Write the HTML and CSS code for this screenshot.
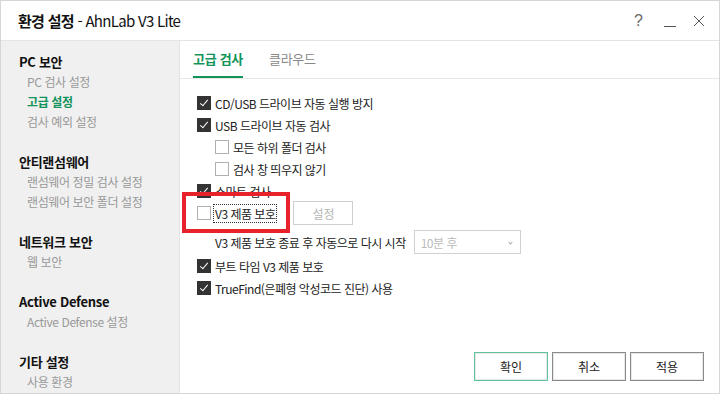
FILE: index.html
```html
<!DOCTYPE html>
<html lang="ko">
    <head>
        <meta charset="UTF-8">
        <title>환경 설정 - AhnLab V3 Lite</title>
        <link rel="stylesheet" href="styles.css">
    </head>
    <body>
        <div class="window">
            <div class="titlebar">
                <p class="title"><b>환경 설정</b> - AhnLab V3 Lite</p>
                <div class="win_btns">
                    <span class="win_help">?</span>
                    <span class="win_min"></span>
                    <svg class="win_close" width="12" height="12" viewBox="0 0 12 12">
                        <path d="M1 1L11 11M11 1L1 11" stroke="#555" stroke-width="1" fill="none"/>
                    </svg>
                </div>
            </div>

            <div class="content">
                <div class="sidebar">
                    <div class="menu_group">
                        <p class="menu_title">PC 보안</p>
                        <p class="menu_item">PC 검사 설정</p>
                        <p class="menu_item active">고급 설정</p>
                        <p class="menu_item">검사 예외 설정</p>
                    </div>
                    <div class="menu_group">
                        <p class="menu_title">안티랜섬웨어</p>
                        <p class="menu_item">랜섬웨어 정밀 검사 설정</p>
                        <p class="menu_item">랜섬웨어 보안 폴더 설정</p>
                    </div>
                    <div class="menu_group">
                        <p class="menu_title">네트워크 보안</p>
                        <p class="menu_item">웹 보안</p>
                    </div>
                    <div class="menu_group">
                        <p class="menu_title">Active Defense</p>
                        <p class="menu_item">Active Defense 설정</p>
                    </div>
                    <div class="menu_group">
                        <p class="menu_title">기타 설정</p>
                        <p class="menu_item">사용 환경</p>
                    </div>
                </div>

                <div class="main">
                    <div class="tabs">
                        <span class="tab tab_on">고급 검사</span>
                        <span class="tab">클라우드</span>
                    </div>

                    <div class="options">
                        <label class="opt"><span class="chk on"></span>CD/USB 드라이브 자동 실행 방지</label>
                        <label class="opt"><span class="chk on"></span>USB 드라이브 자동 검사</label>
                        <label class="opt sub"><span class="chk"></span>모든 하위 폴더 검사</label>
                        <label class="opt sub"><span class="chk"></span>검사 창 띄우지 않기</label>
                        <label class="opt"><span class="chk on"></span>스마트 검사</label>
                        <div class="opt mark_row">
                            <span class="chk"></span><span class="focus_text">V3 제품 보호</span>
                            <button class="btn_set" disabled>설정</button>
                            <!-- 강조 표시 -->
                            <span class="red_mark"></span>
                        </div>
                        <div class="opt sub restart_row">
                            V3 제품 보호 종료 후 자동으로 다시 시작
                            <span class="select">10분 후<i class="arrow"></i></span>
                        </div>
                        <label class="opt"><span class="chk on"></span>부트 타임 V3 제품 보호</label>
                        <label class="opt"><span class="chk on"></span>TrueFind(은폐형 악성코드 진단) 사용</label>
                    </div>

                    <div class="footer">
                        <button class="btn btn_ok">확인</button>
                        <button class="btn">취소</button>
                        <button class="btn">적용</button>
                    </div>
                </div>
            </div>
        </div>
    </body>
</html>
```

FILE: styles.css
```css
* {
    margin: 0;
    padding: 0;
    box-sizing: border-box;
}

body {
    margin: 0;
    width: 720px;
    height: 394px;
    overflow: hidden;
    background-color: white;
    font-family: "Noto Sans CJK KR", "Noto Sans", sans-serif;
    font-size: 12px;
    color: #222;
}

.window {
    width: 720px;
    height: 394px;
    border: 1px solid #d6d6d6;
    display: flex;
    flex-direction: column;
}

/* 타이틀 바 */
.titlebar {
    height: 40px;
    flex: none;
    border-bottom: 1px solid #e4e4e4;
    display: flex;
    align-items: center;
    justify-content: space-between;
    padding: 0 14px 0 17px;
}

.title {
    font-size: 15px;
    color: #111;
    letter-spacing: -0.7px;
}

.title b {
    font-weight: bold;
}

.win_btns {
    display: flex;
    align-items: center;
}

.win_help {
    font-family: "Liberation Sans", sans-serif;
    font-size: 16px;
    color: #666;
    width: 30px;
    text-align: left;
}

.win_min {
    width: 12px;
    height: 1px;
    background-color: #555;
    margin: 12px 17px 0 0;
}

.win_close {
    display: block;
}

/* 본문 */
.content {
    flex: 1;
    display: flex;
    min-height: 0;
}

.sidebar {
    width: 179px;
    flex: none;
    background-color: #f0f0f0;
    border-right: 1px solid #e2e2e2;
    padding: 11px 0 0 18px;
    display: flex;
    flex-direction: column;
    gap: 20px;
}

.menu_title {
    height: 20px;
    line-height: 20px;
    font-size: 13px;
    font-weight: bold;
    color: #111;
    letter-spacing: -0.3px;
}

.menu_item {
    height: 20px;
    line-height: 20px;
    padding-left: 8px;
    color: #999;
    letter-spacing: -0.4px;
}

.menu_item.active {
    color: #12935a;
    font-weight: bold;
}

.main {
    flex: 1;
    display: flex;
    flex-direction: column;
}

.tabs {
    height: 38px;
    flex: none;
    border-bottom: 1px solid #e8e8e8;
    padding-left: 13px;
    display: flex;
    gap: 26px;
}

.tab {
    font-size: 13px;
    line-height: 35px;
    color: #888;
    letter-spacing: -0.3px;
}

.tab_on {
    color: #12935a;
    font-weight: bold;
    border-bottom: 2px solid #12935a;
}

.options {
    flex: 1;
    padding: 13px 0 0 17px;
}

.opt {
    height: 22px;
    display: flex;
    align-items: center;
    color: #222;
    letter-spacing: -0.5px;
}

.opt.sub {
    padding-left: 18px;
}

.chk {
    width: 14px;
    height: 14px;
    border: 1px solid #b0b0b0;
    background-color: white;
    margin-right: 4px;
    flex: none;
    position: relative;
}

.chk.on {
    background-color: #333;
    border-color: #333;
}

.chk.on::after {
    content: "";
    position: absolute;
    left: 4px;
    top: 1px;
    width: 3px;
    height: 7px;
    border: solid white;
    border-width: 0 1.5px 1.5px 0;
    transform: rotate(40deg);
}

.mark_row {
    position: relative;
}

.focus_text {
    border: 1px dotted #333;
    padding: 0 1px;
    line-height: 17px;
    margin-left: -2px;
}

.btn_set {
    width: 60px;
    height: 24px;
    margin-left: 16px;
    border: 1px solid #cfcfcf;
    background-color: white;
    color: #b5b5b5;
    font-family: inherit;
    font-size: 12px;
}

.red_mark {
    position: absolute;
    left: -15px;
    top: -10px;
    width: 108px;
    height: 41px;
    border: 4px solid #e8222b;
}

.restart_row {
    height: 24px;
    margin: 6px 0 1px;
}

.select {
    width: 107px;
    height: 24px;
    margin-left: 8px;
    border: 1px solid #d0d0d0;
    color: #bbb;
    padding-left: 6px;
    display: flex;
    align-items: center;
    justify-content: space-between;
    padding-right: 8px;
}

.arrow {
    width: 3px;
    height: 3px;
    border: solid #aaa;
    border-width: 0 1px 1px 0;
    transform: rotate(45deg);
}

.footer {
    flex: none;
    display: flex;
    justify-content: flex-end;
    gap: 4px;
    padding: 0 15px 12px 0;
}

.btn {
    width: 74px;
    height: 29px;
    border: 1px solid #8a8a8a;
    box-shadow: inset 0 0 0 1px #e8e8e8;
    background-color: white;
    font-family: inherit;
    font-size: 12px;
    color: #222;
}

.btn_ok {
    border-color: #5fc49a;
}
```
